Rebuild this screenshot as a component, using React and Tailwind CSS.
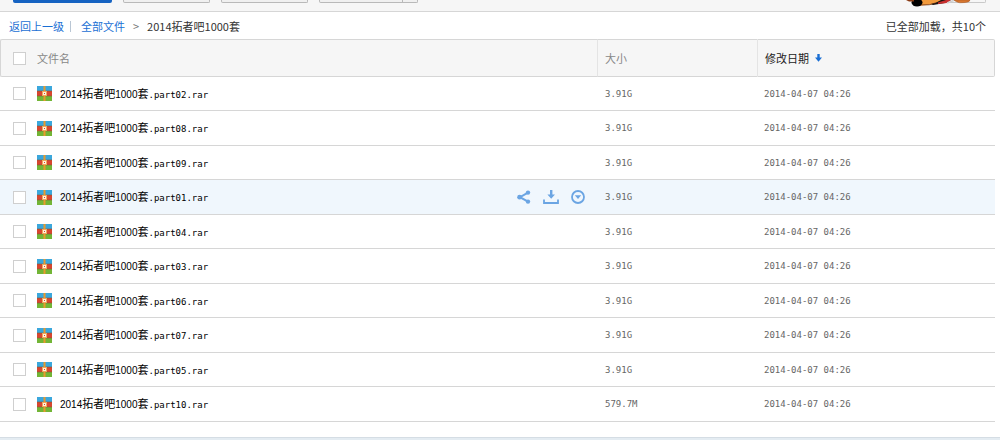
import React, { useState } from 'react';

const files = [
  { part: '02', size: '3.91G' },
  { part: '08', size: '3.91G' },
  { part: '09', size: '3.91G' },
  { part: '01', size: '3.91G' },
  { part: '04', size: '3.91G' },
  { part: '03', size: '3.91G' },
  { part: '06', size: '3.91G' },
  { part: '07', size: '3.91G' },
  { part: '05', size: '3.91G' },
  { part: '10', size: '579.7M' },
];

const checkboxClass =
  'w-[13px] h-[13px] shrink-0 appearance-none border border-[#cfcfcf] bg-white checked:bg-[#1a6fd4]';

const monoClass = "font-['DejaVu_Sans_Mono',monospace] text-[9px]";
const digitClass = "font-['Liberation_Sans',sans-serif] text-[10px]";

const RarIcon = () => (
  <svg className="w-[15px] h-[15px] shrink-0" viewBox="0 0 15 15" aria-hidden="true">
    <rect width="15" height="5" fill="#3ba7dc" />
    <rect y="5" width="15" height="5" fill="#d8452f" />
    <rect y="10" width="15" height="5" fill="#72b536" />
    <path d="M0 5h15M0 10h15" stroke="#7d5a35" strokeWidth="0.6" />
    <rect x="6.5" width="2" height="15" fill="#e79a2c" />
    <rect x="5" y="5" width="5" height="5" fill="#f0a85c" />
    <rect x="6" y="6" width="3" height="3" fill="#fff3dc" />
    <rect x="7" y="7" width="1" height="1" fill="#d8452f" />
  </svg>
);

const ShareIcon = () => (
  <svg width="14" height="14" viewBox="0 0 14 14" fill="#6ba5e3" aria-hidden="true">
    <path d="M11 2.6L3 7.2l8 4.400" fill="none" stroke="#6ba5e3" strokeWidth="2" />
    <circle cx="11" cy="2.6" r="2.2" />
    <circle cx="2.6" cy="7.2" r="2.4" />
    <circle cx="11" cy="11.6" r="2.2" />
  </svg>
);

const DownloadIcon = () => (
  <svg width="16" height="14" viewBox="0 0 16 14" aria-hidden="true">
    <path d="M7 0h2.4v4.5H12L8.2 8.8 4.4 4.5H7z" fill="#6ba5e3" />
    <path d="M1 9.5V13h14V9.5" fill="none" stroke="#6ba5e3" strokeWidth="1.8" />
  </svg>
);

const MoreIcon = () => (
  <svg width="14" height="14" viewBox="0 0 14 14" aria-hidden="true">
    <circle cx="7" cy="7" r="6" fill="none" stroke="#6ba5e3" strokeWidth="1.8" />
    <path d="M3.8 5.3h6.4L7 9z" fill="#6ba5e3" />
  </svg>
);

const Mascot = () => (
  <svg
    className="absolute top-0 right-[27px]"
    width="70"
    height="8"
    viewBox="0 0 70 8"
    aria-hidden="true"
  >
    <path d="M12 0h32l-6 3-14 2-10 1z" fill="#f29a3c" />
    <path d="M17 5q9 1 19-3" fill="none" stroke="#6b2f10" strokeWidth="0.8" />
    <path d="M28 4Q34 3 38 0h10l-6 3-12 2z" fill="#1d1512" />
    <path d="M35 2.500l8-2.500h5l-4 3-9 1z" fill="#c92f2f" />
    <path d="M44 3l8-3" stroke="#cfcfcf" strokeWidth="1.500" />
    <path d="M51 0h16q0 2-5 2.500-6 1-9-1z" fill="#d9772f" stroke="#a3531f" strokeWidth="0.5" />
    <ellipse cx="14" cy="2.500" rx="5.500" ry="4" fill="#000" />
    <path d="M3 0h8v1.500H6z" fill="#8a3b14" />
  </svg>
);

const Toolbar = () => (
  <header className="relative flex items-start justify-between h-3 pl-[13px] pr-[14px] bg-[#f6f6f6] border-b border-[#d6d6d6]">
    <div className="flex gap-[11px]">
      <button aria-label="上传" className="w-[99px] h-[3px] rounded-b-xs bg-[#1663c2]" />
      <button aria-label="新建文件夹" className="w-[87px] h-[3px] rounded-b-xs border border-t-0 border-[#b9b9b9] bg-[#f0f0f0]" />
      <button aria-label="离线下载" className="w-[87px] h-[3px] rounded-b-xs border border-t-0 border-[#b9b9b9] bg-[#f0f0f0]" />
      <div className="flex">
        <button aria-label="我的设备" className="w-[84px] h-[3px] rounded-bl-xs border border-t-0 border-[#b9b9b9] bg-[#f0f0f0]" />
        <button aria-label="更多设备" className="w-[15px] h-[3px] rounded-br-xs border border-t-0 border-l-0 border-[#b9b9b9] bg-[#f0f0f0]" />
      </div>
    </div>
    <button aria-label="切换视图" className="w-[50px] h-[3px] rounded-b-xs border border-t-0 border-[#c9c9c9] bg-[#f6f6f6]" />
    <Mascot />
  </header>
);

const Breadcrumb = () => (
  <div className="flex items-center justify-between h-[27px] pl-[9px] pr-[14px] pt-px">
    <nav className="flex items-center">
      <a href="#back" className="text-[#1a6fd4]">返回上一级</a>
      <span className="w-px h-[11px] ml-[6px] mr-[10px] bg-[#b9c6d4]" />
      <a href="#all" className="text-[#1a6fd4]">全部文件</a>
      <span className="mx-2 text-[#777]">&gt;</span>
      <span className="text-[#333]">2014拓者吧1000套</span>
    </nav>
    <span className="text-[#333]">已全部加载，共10个</span>
  </div>
);

const FileRow = ({ file, active, onHover }) => (
  <tr
    onMouseEnter={onHover}
    className={`odd:h-[34px] even:h-[35px] ${active ? 'bg-[#f0f7fd]' : 'bg-white'}`}
  >
    <td className="border-b border-[#d6d6d6] pl-[13px] pr-3">
      <div className="flex items-center">
        <input
          type="checkbox"
          aria-label={`2014拓者吧1000套.part${file.part}.rar`}
          className={checkboxClass}
        />
        <span className="ml-[11px] mr-2">
          <RarIcon />
        </span>
        <span className="grow leading-4 text-black whitespace-nowrap">
          <span className={digitClass}>2014</span>拓者吧
          <span className={digitClass}>1000</span>套
          <span className={monoClass}>.part{file.part}.rar</span>
        </span>
        {active && (
          <span className="flex items-center gap-3">
            <button aria-label="分享"><ShareIcon /></button>
            <button aria-label="下载"><DownloadIcon /></button>
            <button aria-label="更多"><MoreIcon /></button>
          </span>
        )}
      </div>
    </td>
    <td className={`border-b border-[#d6d6d6] pl-2 text-[#666] ${monoClass}`}>{file.size}</td>
    <td className={`border-b border-[#d6d6d6] pl-[7px] text-[#666] ${monoClass}`}>2014-04-07 04:26</td>
  </tr>
);

const FileTable = () => {
  const [activePart, setActivePart] = useState('01');

  return (
    <div className="pr-[5px]">
      <table className="w-full table-fixed border-separate border-spacing-0">
        <thead>
          <tr className="h-[38px] text-left text-[#888]">
            <th className="border border-r-0 border-[#d6d6d6] rounded-l-xs bg-[#f6f6f6] pl-3 font-normal">
              <div className="flex items-center">
                <input type="checkbox" aria-label="全选" className={checkboxClass} />
                <span className="ml-[11px]">文件名</span>
              </div>
            </th>
            <th className="w-40 border-y border-l border-y-[#d6d6d6] border-l-[#e4e4e4] bg-[#f6f6f6] pl-[7px] font-normal">
              大小
            </th>
            <th className="w-[238px] border border-[#d6d6d6] border-l-[#e4e4e4] rounded-r-xs bg-[#f6f6f6] pl-[7px] font-normal text-[#222]">
              <button className="flex items-center gap-[6px]">
                修改日期
                <svg width="7" height="8" viewBox="0 0 7 8" aria-hidden="true">
                  <path d="M2.300 0h2.400v3.500H7L3.500 7.800 0 3.500h2.300z" fill="#1a6fd4" />
                </svg>
              </button>
            </th>
          </tr>
        </thead>
        <tbody>
          {files.map((file) => (
            <FileRow
              key={file.part}
              file={file}
              active={file.part === activePart}
              onHover={() => setActivePart(file.part)}
            />
          ))}
        </tbody>
      </table>
    </div>
  );
};

const App = () => (
  <div className="min-h-screen flex flex-col bg-white font-['Noto_Sans_CJK_SC',sans-serif] text-[11px] leading-4">
    <Toolbar />
    <main className="grow">
      <Breadcrumb />
      <FileTable />
    </main>
    <footer className="h-[3px] bg-[#e4ecf2] border-t border-[#d5dde4]" />
  </div>
);

export default App;
